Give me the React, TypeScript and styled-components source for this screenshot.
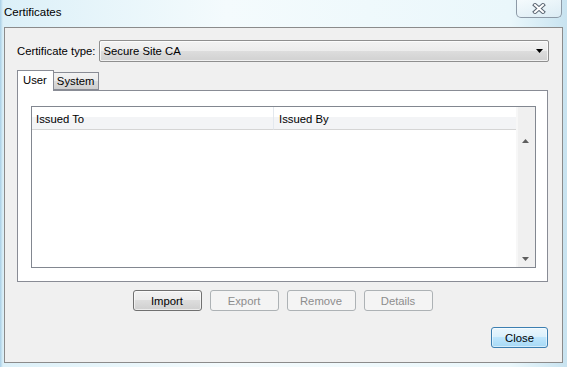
import styled, { createGlobalStyle } from 'styled-components';

const Global = createGlobalStyle`
  html, body {
    margin: 0;
    padding: 0;
  }
  body {
    font-family: "Liberation Sans", Arial, sans-serif;
    font-size: 11.3px;
    color: #000;
  }
`;

const Frame = styled.div`
  width: 567px;
  height: 367px;
  display: flex;
  flex-direction: column;
  box-sizing: border-box;
  background: linear-gradient(
    to right,
    #a9cfe6 0,
    #dcf0f8 3px,
    #f4fbfd 40%,
    #eaf7fb 90%,
    #c8e3f0 100%
  );
`;

const TitleBar = styled.div`
  height: 27px;
  display: flex;
  align-items: flex-start;
  justify-content: space-between;
  padding: 0 5px 0 4px;
`;

const Title = styled.span`
  margin-top: 6px;
  font-size: 11.5px;
  color: #000;
`;

const CloseCaption = styled.div`
  width: 46px;
  height: 18px;
  box-sizing: border-box;
  border: 1px solid #8d9aa7;
  border-top: none;
  border-radius: 0 0 5px 5px;
  background: linear-gradient(to bottom, rgba(255,255,255,0.6), rgba(230,240,246,0.6));
  display: flex;
  align-items: center;
  justify-content: center;
`;

const Client = styled.div`
  margin: 0 4px 4px 4px;
  flex: 1;
  border: 1px solid #8b8b8b;
  background: #f0f0f0;
  display: flex;
  flex-direction: column;
  padding: 12px 13px 0 12px;
`;

const TypeRow = styled.div`
  display: flex;
  align-items: center;
  gap: 4px;
  height: 22px;
`;

const Select = styled.div`
  flex: 1;
  height: 22px;
  box-sizing: border-box;
  border: 1px solid #8f8f8f;
  border-radius: 2px;
  background: linear-gradient(to bottom, #f3f3f3 0, #ececec 50%, #dddddd 50%, #d1d1d1 100%);
  box-shadow: inset 0 0 0 1px rgba(255,255,255,0.7);
  display: flex;
  align-items: center;
  justify-content: space-between;
  padding: 0 5px 0 3px;
`;

const Tabs = styled.div`
  margin-top: 8px;
  display: flex;
  flex-direction: column;
  margin-right: 1px;
`;

const TabStrip = styled.div`
  display: flex;
  align-items: flex-end;
  height: 20px;
  position: relative;
  z-index: 1;
`;

const Tab = styled.div<{ $active?: boolean }>`
  box-sizing: border-box;
  height: ${(p) => (p.$active ? '21px' : '18px')};
  margin-bottom: ${(p) => (p.$active ? '-1px' : '0')};
  padding: ${(p) => (p.$active ? '3px 6px 0 5px' : '2px 3px 0 3px')};
  border: 1px solid #898c95;
  border-bottom: ${(p) => (p.$active ? 'none' : '1px solid #898c95')};
  background: ${(p) =>
    p.$active ? '#fff' : 'linear-gradient(to bottom, #f2f2f2 0, #ebebeb 50%, #dddddd 50%, #cfcfcf 100%)'};
  margin-left: ${(p) => (p.$active ? '0' : '-1px')};
`;

const Panel = styled.div`
  height: 192px;
  box-sizing: border-box;
  border: 1px solid #898c95;
  background: #fff;
  padding: 15px 11px 13px 13px;
  display: flex;
`;

const List = styled.div`
  flex: 1;
  border: 1px solid #828790;
  background: #fff;
  display: grid;
  grid-template-columns: 242px 1fr 19px;
  grid-template-rows: 23px 1fr;
`;

const HeaderCell = styled.div<{ $divider?: boolean }>`
  background: linear-gradient(to bottom, #ffffff 0, #ffffff 45%, #f3f4f6 45%, #f3f4f6 100%);
  border-bottom: 1px solid #d5d5d5;
  border-right: ${(p) => (p.$divider ? '1px solid #e3e8ee' : 'none')};
  padding-left: ${(p) => (p.$divider ? '4px' : '5px')};
  display: flex;
  align-items: center;
  padding-top: 2px;
`;

const HeaderCorner = styled.div`
  background: #f0f0f0;
  grid-row: 1 / 3;
  grid-column: 3;
  display: flex;
  flex-direction: column;
  align-items: center;
  justify-content: space-between;
  padding: 32px 0 6px 0;
  box-shadow: inset 2px 0 0 #f7f7f7;
`;

const Body = styled.div`
  grid-column: 1 / 3;
  background: #fff;
`;

const ButtonRow = styled.div`
  display: flex;
  justify-content: center;
  gap: 8px;
  margin-top: 8px;
  margin-right: 1px;
`;

const Button = styled.div<{ $disabled?: boolean }>`
  width: 69px;
  height: 21px;
  box-sizing: border-box;
  border-radius: 3px;
  display: flex;
  align-items: center;
  justify-content: center;
  border: 1px solid ${(p) => (p.$disabled ? '#adb2b5' : '#707070')};
  color: ${(p) => (p.$disabled ? '#8d8d8d' : '#000')};
  background: ${(p) =>
    p.$disabled
      ? '#f4f4f4'
      : 'linear-gradient(to bottom, #f2f2f2 0, #ebebeb 50%, #dddddd 50%, #cfcfcf 100%)'};
  box-shadow: ${(p) => (p.$disabled ? 'none' : 'inset 0 0 0 1px rgba(255,255,255,0.6)')};
`;

const Footer = styled.div`
  display: flex;
  justify-content: flex-end;
  margin-top: 16px;
  padding-right: 1px;
`;

const DefaultButton = styled(Button)`
  width: 57px;
  height: 21px;
  border-color: #3c7fb1;
  background: linear-gradient(to bottom, #eaf6fd 0, #d9f0fc 50%, #bee6fd 50%, #a7d9f5 100%);
  box-shadow: inset 0 0 0 1px rgba(255,255,255,0.5);
`;

function CaptionX() {
  return (
    <svg width="14" height="11" viewBox="0 0 14 11">
      <path d="M3 2 L11 9 M11 2 L3 9" stroke="#5b6673" strokeWidth="4" strokeLinecap="square" fill="none" />
      <path d="M3 2 L11 9 M11 2 L3 9" stroke="#fff" strokeWidth="2" strokeLinecap="square" fill="none" />
    </svg>
  );
}

function Arrow({ up, color }: { up?: boolean; color: string }) {
  return (
    <svg width="7" height="4" viewBox="0 0 7 4">
      <path d={up ? 'M0 4 L3.5 0 L7 4 Z' : 'M0 0 L7 0 L3.5 4 Z'} fill={color} />
    </svg>
  );
}

export default function App() {
  return (
    <Frame>
      <Global />
      <TitleBar>
        <Title>Certificates</Title>
        <CloseCaption>
          <CaptionX />
        </CloseCaption>
      </TitleBar>
      <Client>
        <TypeRow>
          <span>Certificate type:</span>
          <Select>
            <span>Secure Site CA</span>
            <Arrow color="#000" />
          </Select>
        </TypeRow>
        <Tabs>
          <TabStrip>
            <Tab $active>User</Tab>
            <Tab>System</Tab>
          </TabStrip>
          <Panel>
            <List>
              <HeaderCell $divider>Issued To</HeaderCell>
              <HeaderCell>Issued By</HeaderCell>
              <HeaderCorner>
                <Arrow up color="#5e5e5e" />
                <Arrow color="#5e5e5e" />
              </HeaderCorner>
              <Body />
            </List>
          </Panel>
        </Tabs>
        <ButtonRow>
          <Button>Import</Button>
          <Button $disabled>Export</Button>
          <Button $disabled>Remove</Button>
          <Button $disabled>Details</Button>
        </ButtonRow>
        <Footer>
          <DefaultButton>Close</DefaultButton>
        </Footer>
      </Client>
    </Frame>
  );
}
